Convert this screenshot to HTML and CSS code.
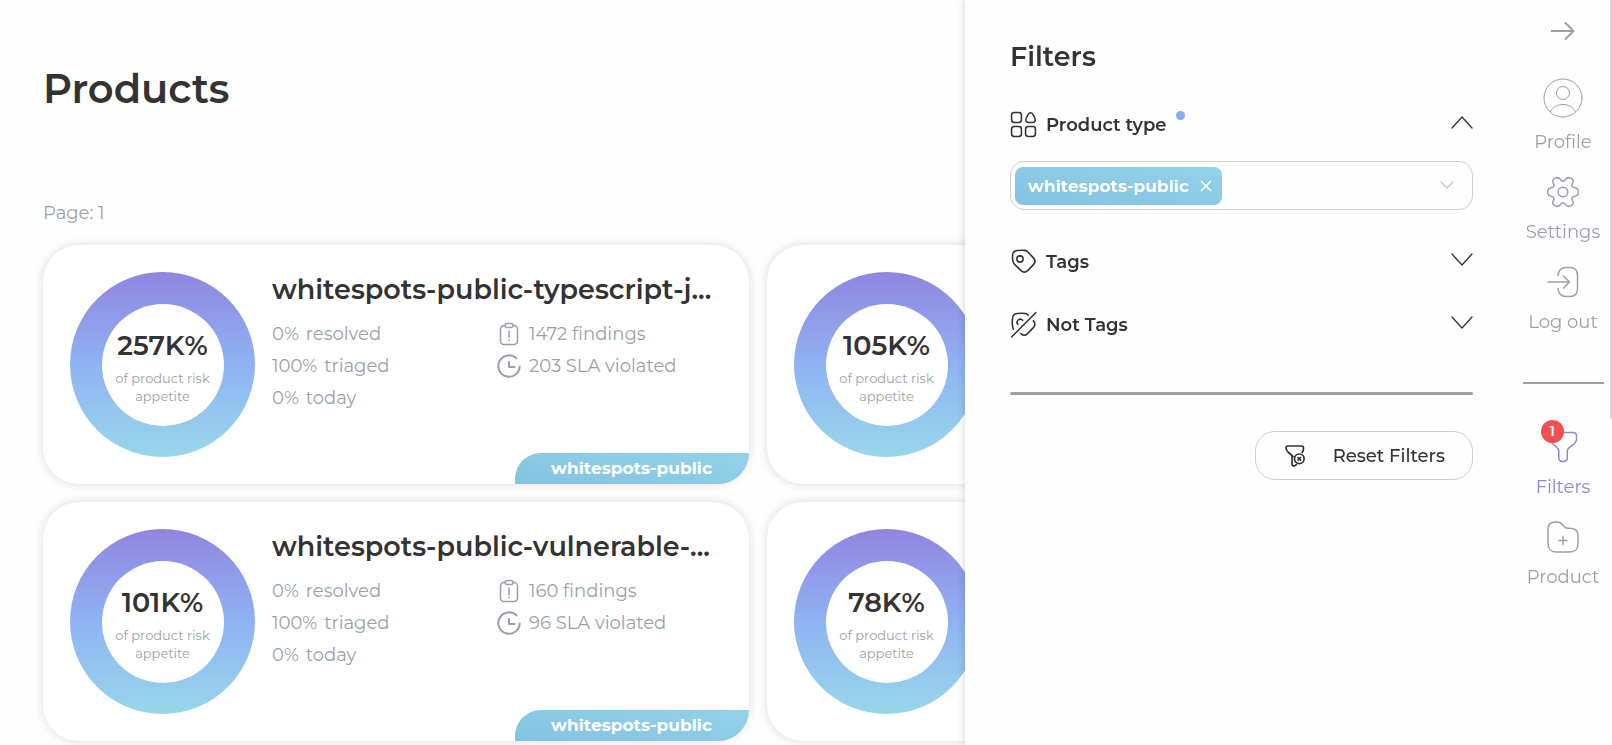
FILE: index.html
```html
<!DOCTYPE html>
<html lang="en">
<head>
<meta charset="utf-8">
<meta name="viewport" content="width=device-width, initial-scale=1">
<title>Products</title>
<link rel="stylesheet" href="styles.css">
</head>
<body>
<svg class="sprite" aria-hidden="true">
  <symbol id="clipboard" viewBox="0 0 24 24"><path d="M8 3.500H7a3.500 3.500 0 0 0-3.500 3.500v12a3.500 3.500 0 0 0 3.500 3.500h10a3.500 3.500 0 0 0 3.500-3.500V7A3.500 3.500 0 0 0 17 3.500h-1M8 3.500c0-1.400.8-2 2-2h4c1.200 0 2 .6 2 2s-.8 2-2 2h-4c-1.200 0-2-.6-2-2zM12 9v6.500M12 18v.5"/></symbol>
  <symbol id="clock" viewBox="0 0 24 24"><path d="M19.500 4.400A10.700 10.700 0 1 0 22.700 12.500M12 8v5h5.500"/></symbol>
  <symbol id="chevron" viewBox="0 0 22 13"><path d="M1 1l10 11L21 1"/></symbol>
</svg>

<main class="page">
  <h1 class="page-title">Products</h1>
  <p class="page-number">Page: 1</p>
  <section class="cards">
    <article class="card">
      <div class="donut"><div class="donut-hole"><strong class="risk">257K%</strong><span class="risk-label">of product risk appetite</span></div></div>
      <div class="details">
        <h2 class="card-title">whitespots-public-typescript-j...</h2>
        <div class="stats">
          <ul class="stat-list"><li><span>0%</span> <span>resolved</span></li><li><span>100%</span> <span>triaged</span></li><li><span>0%</span> <span>today</span></li></ul>
          <ul class="stat-list"><li><svg class="stat-icon thin"><use href="#clipboard"/></svg>1472 findings</li><li><svg class="stat-icon"><use href="#clock"/></svg>203 SLA violated</li></ul>
        </div>
      </div>
      <span class="card-tag">whitespots-public</span>
    </article>
    <article class="card">
      <div class="donut"><div class="donut-hole"><strong class="risk">105K%</strong><span class="risk-label">of product risk appetite</span></div></div>
    </article>
    <article class="card">
      <div class="donut"><div class="donut-hole"><strong class="risk">101K%</strong><span class="risk-label">of product risk appetite</span></div></div>
      <div class="details">
        <h2 class="card-title">whitespots-public-vulnerable-...</h2>
        <div class="stats">
          <ul class="stat-list"><li><span>0%</span> <span>resolved</span></li><li><span>100%</span> <span>triaged</span></li><li><span>0%</span> <span>today</span></li></ul>
          <ul class="stat-list"><li><svg class="stat-icon thin"><use href="#clipboard"/></svg>160 findings</li><li><svg class="stat-icon"><use href="#clock"/></svg>96 SLA violated</li></ul>
        </div>
      </div>
      <span class="card-tag">whitespots-public</span>
    </article>
    <article class="card">
      <div class="donut"><div class="donut-hole"><strong class="risk">78K%</strong><span class="risk-label">of product risk appetite</span></div></div>
    </article>
  </section>
</main>

<aside class="drawer">
  <section class="filters">
    <h2 class="filters-title">Filters</h2>
    <button class="filter-head" type="button" aria-expanded="true">
      <svg class="filter-icon" viewBox="0 0 26 26"><rect x="1.500" y="1.500" width="9.500" height="9.500" rx="2.500"/><rect x="1.500" y="15" width="9.500" height="9.500" rx="2.500"/><rect x="15" y="15" width="9.500" height="9.500" rx="2.500"/><path d="M17.700 3c1-1.700 3.200-1.700 4.200 0 1 1.600 1.800 3 2.300 4.600.6 2-.6 3.400-2.600 3.400h-3.600c-2 0-3.200-1.400-2.600-3.400.5-1.600 1.300-3 2.300-4.600z"/></svg>
      <span>Product type</span><i class="dot"></i>
      <svg class="chevron up"><use href="#chevron"/></svg>
    </button>
    <div class="select">
      <span class="chip">whitespots-public<button class="chip-remove" type="button" aria-label="Remove whitespots-public"><svg viewBox="0 0 12 12"><path d="M1.500 1.500l9 9M10.500 1.500l-9 9"/></svg></button></span>
      <input class="select-input" type="text" aria-label="Product type">
      <svg class="select-arrow" viewBox="0 0 14 9"><path d="M1 1l6 6 6-6"/></svg>
    </div>
    <button class="filter-head" type="button" aria-expanded="false">
      <svg class="filter-icon" viewBox="0 0 26 26"><path d="M2.500 7C2.700 4.200 4 2.800 6.800 2.500c2.600-.3 5-.4 7.200-.2 1.300.1 2.300.7 3.200 1.600l5.400 5.600c2 2.200 2 4.400 0 6.500l-5.600 5.800c-2.200 2-4.200 2-6.400 0l-6-5.800c-1-1-1.600-2-1.800-3.300-.4-2-.5-3.600-.3-5.700z"/><circle cx="9.600" cy="10.600" r="3"/></svg>
      <span>Tags</span>
      <svg class="chevron"><use href="#chevron"/></svg>
    </button>
    <button class="filter-head" type="button" aria-expanded="false">
      <svg class="filter-icon" viewBox="0 0 26 26"><path d="M3.200 17.500C2.200 15 2 10.500 2.500 7 2.700 4.200 4 2.800 6.800 2.500c3-.4 6-.4 8 0 1 .2 2 .8 2.700 1.500M22.500 9.500c2 2.200 2 4.400 0 6.500l-5.600 5.800c-2 2-4.400 2-6.400 0M7.600 13a3 3 0 1 1 4.600-4M1.500 25L25 1.500"/></svg>
      <span>Not Tags</span>
      <svg class="chevron"><use href="#chevron"/></svg>
    </button>
    <hr class="filters-rule">
    <button class="reset" type="button">
      <svg class="reset-icon" viewBox="0 0 20 22"><path d="M8 11.500L3 7C1.500 5.500 1 4.500 1 3 1 1.800 1.800 1 3 1h13.500c1.200 0 2 .8 2 2 0 1.800-.3 3-1.300 4.500M7 10.500v8.200c0 2 1.500 2.800 3 1.800l1.500-1"/><circle cx="14.300" cy="13.800" r="4.800"/><path d="M13 12.500l2.600 2.600M15.600 12.500L13 15.100"/></svg>
      <span>Reset Filters</span>
    </button>
  </section>

  <nav class="rail">
    <button class="rail-toggle" type="button" aria-label="Collapse"><svg viewBox="0 0 24 18"><path d="M.5 9h22M14.500 1l8 8-8 8"/></svg></button>
    <a class="rail-item" href="#profile"><svg class="avatar" viewBox="0 0 40 40"><circle cx="20" cy="20" r="19"/><circle cx="20" cy="15" r="6.500"/><path d="M7.500 33.500c2.500-4.600 7-7 12.500-7s10 2.400 12.500 7"/></svg>Profile</a>
    <a class="rail-item" href="#settings"><svg viewBox="0 0 32 32"><circle cx="16" cy="16" r="4.800"/><path d="M31.500 16Q31.500 19.500 28 20.200Q23.500 21 25.600 24.500Q27.500 28 24 29.800Q20.500 31.500 18.500 28.300Q16 25 13.500 28.300Q11.500 31.500 8 29.800Q4.500 28 6.400 24.500Q8.500 21 4 20.200Q.5 19.500.5 16Q.5 12.500 4 11.800Q8.500 11 6.400 7.500Q4.500 4 8 2.200Q11.500.5 13.500 3.700Q16 7 18.500 3.700Q20.500.5 24 2.200Q27.500 4 25.600 7.500Q23.500 11 28 11.800Q31.500 12.500 31.500 16z"/></svg>Settings</a>
    <a class="rail-item" href="#logout"><svg viewBox="0 0 32 32"><path d="M11 9.500C11.500 4 14 1.500 19 1.500h4c5 0 7.500 3 7.500 8v13c0 5-2.500 8-7.500 8h-4c-5 0-7.500-2.500-8-8M1 16h21M16.500 10l6 6-6 6"/></svg>Log out</a>
    <hr class="rail-rule">
    <a class="rail-item active" href="#filters"><span class="badge">1</span><svg viewBox="0 0 32 32"><path d="M5 1.500h21c2.500 0 3.500 1 3.500 3.500v3c0 2-1 3.500-2.500 4.800l-5 4c-1.300 1-1.700 2-1.700 3.500v7c0 4.200-8.500 4.200-8.500 0v-7c0-1.500-.4-2.500-1.600-3.500l-5-4.500C3 10.700 2 9.500 2 7.500V5c0-2.500 1-3.500 3-3.500z"/></svg>Filters</a>
    <a class="rail-item" href="#product"><svg viewBox="0 0 32 32"><path d="M1 8.500C1 3.500 3 1 8 1h2c3 0 4.500 1 6 3 2.300 3 3 3.300 6 3.300 6 0 9 1.500 9 8V22c0 6.500-2.500 9-9 9H10c-6.500 0-9-2.500-9-9zM12 19.500h8M16 15.500v8"/></svg>Product</a>
  </nav>
  <span class="scroll-thumb"></span>
</aside>
</body>
</html>
```
FILE: styles.css
```css
* { box-sizing: border-box; }

html { height: 100%; overflow: hidden; }

body {
  margin: 0;
  min-height: 100%;
  background: #fefefe;
  color: #333;
  font-family: Montserrat, Inter, sans-serif;
  font-size: 18px;
}

h1, h2, p, ul { margin: 0; padding: 0; }
ul { list-style: none; }
button { border: 0; padding: 0; background: none; color: inherit; font: inherit; cursor: pointer; }
svg { fill: none; stroke: currentColor; stroke-width: 2; stroke-linecap: round; stroke-linejoin: round; flex: none; }
.sprite { position: absolute; width: 0; height: 0; }

.page { padding: 64px 139px 0 43px; }
.page-title { font-size: 40px; font-weight: 600; line-height: 50px; }
.page-number { margin-top: 86px; color: #9c9faa; line-height: 26px; }

.cards { display: grid; grid-template-columns: 1fr 1fr; gap: 18px; margin-top: 19px; }
.card {
  position: relative;
  display: flex;
  gap: 17px;
  min-width: 0;
  min-height: 239px;
  padding: 27px;
  border-radius: 36px;
  background: #fff;
  box-shadow: 0 0 10px rgba(0, 0, 0, 0.14);
}

.donut {
  display: grid;
  place-items: center;
  flex: none;
  width: 185px;
  height: 185px;
  border-radius: 50%;
  background: linear-gradient(#9085e0, #8fb3f3 50%, #98d7e9);
}
.donut-hole {
  display: flex;
  flex-direction: column;
  align-items: center;
  justify-content: center;
  gap: 5px;
  width: 122px;
  height: 122px;
  padding: 4px 8px 0;
  border-radius: 50%;
  background: #fff;
  text-align: center;
}
.risk { font-size: 27px; font-weight: 600; line-height: 36px; }
.risk-label { color: #9c9faa; font-size: 13px; line-height: 18px; }

.details { flex: 1; min-width: 0; }
.card-title { overflow: hidden; font-size: 27px; font-weight: 600; line-height: 36px; white-space: nowrap; }
.stats { display: grid; grid-template-columns: 1fr 1fr; margin-top: 10px; color: #9c9faa; line-height: 32px; }
.stat-list li { display: flex; align-items: center; gap: 7px; }
.stat-icon { width: 24px; height: 24px; margin-right: 1px; }
.stat-icon.thin { stroke-width: 1.5; }
.card-tag {
  position: absolute;
  right: 0;
  bottom: 0;
  padding: 0 37px 0 36px;
  border-radius: 30px 0 36px 0;
  background: linear-gradient(10deg, #83c3e3, #94d2e8);
  color: #fff;
  font-size: 17px;
  font-weight: 700;
  line-height: 31px;
}

.drawer {
  position: fixed;
  inset: 0 0 0 auto;
  display: flex;
  width: 647px;
  padding-left: 45px;
  background: #fefefe;
  box-shadow: 0 0 8px rgba(0, 0, 0, 0.18);
}
.filters { display: flex; flex: 1; flex-direction: column; padding-top: 39px; }
.filters-title { margin-bottom: 34px; font-size: 27px; font-weight: 600; line-height: 36px; }
.filter-head { display: flex; align-items: center; height: 31px; font-weight: 600; line-height: 30px; }
.filter-icon { width: 27px; height: 27px; margin-right: 9px; stroke-width: 1.5; }
.dot { align-self: flex-start; width: 9px; height: 9px; margin: 2px 0 0 9px; border-radius: 50%; background: #85aaf7; }
.chevron { width: 22px; height: 13px; margin: 0 0 4px auto; stroke-width: 1.3; }
.chevron.up { transform: rotate(180deg); }

.select {
  display: flex;
  align-items: center;
  height: 49px;
  margin: 21px 0 36px;
  padding: 0 18px 0 4px;
  border: 1px solid #cfcfcf;
  border-radius: 14px;
}
.chip {
  display: flex;
  align-items: center;
  gap: 11px;
  padding: 0 10px 0 13px;
  border-radius: 8px;
  background: linear-gradient(10deg, #83c3e3, #94d2e8);
  color: #fff;
  font-size: 17px;
  font-weight: 700;
  line-height: 38px;
}
.chip-remove { display: flex; }
.chip-remove svg { width: 12px; height: 12px; stroke-width: 1.5; }
.select-input { flex: 1; min-width: 0; border: 0; outline: 0; background: none; font: inherit; }
.select-arrow { width: 14px; height: 9px; color: #ccc; stroke-width: 1.5; }
.select + .filter-head { margin-bottom: 32px; }
.filters-rule { width: 100%; height: 3px; margin: 52px 0 36px; border: 0; border-radius: 2px; background: #9c9faa; }
.reset {
  display: flex;
  align-items: center;
  align-self: flex-end;
  gap: 28px;
  height: 49px;
  padding: 0 27px 0 29px;
  border: 1px solid #cfcfcf;
  border-radius: 20px;
  font-weight: 500;
}
.reset-icon { width: 20px; height: 22px; stroke-width: 1.7; }

.rail { display: flex; flex-direction: column; align-items: center; width: 98px; margin-left: 41px; padding-top: 20px; color: #9c9faa; }
.rail-toggle { display: flex; align-items: center; height: 21px; }
.rail-toggle svg { width: 24px; height: 18px; }
.rail-item {
  position: relative;
  display: flex;
  flex-direction: column;
  align-items: center;
  gap: 12px;
  margin-bottom: 21px;
  color: inherit;
  line-height: 25px;
  text-decoration: none;
}
.rail-item svg { width: 32px; height: 32px; stroke-width: 1.5; }
.rail-item .avatar { width: 40px; height: 40px; stroke-width: 1; }
.rail-toggle + .rail-item { margin-top: 37px; }
.rail-rule { width: 81px; height: 2px; margin: 26px 0 47px; border: 0; background: #9c9faa; }
.active { color: #8f85e0; }
.badge {
  position: absolute;
  top: -11px;
  left: 5px;
  width: 23px;
  height: 23px;
  border-radius: 50%;
  background: #f15050;
  color: #fff;
  font-size: 14px;
  font-weight: 600;
  line-height: 23px;
  text-align: center;
}
.scroll-thumb { position: absolute; top: 0; right: 0; width: 2px; height: 419px; border-radius: 0 0 0 2px; background: #d6d9e1; }
```
